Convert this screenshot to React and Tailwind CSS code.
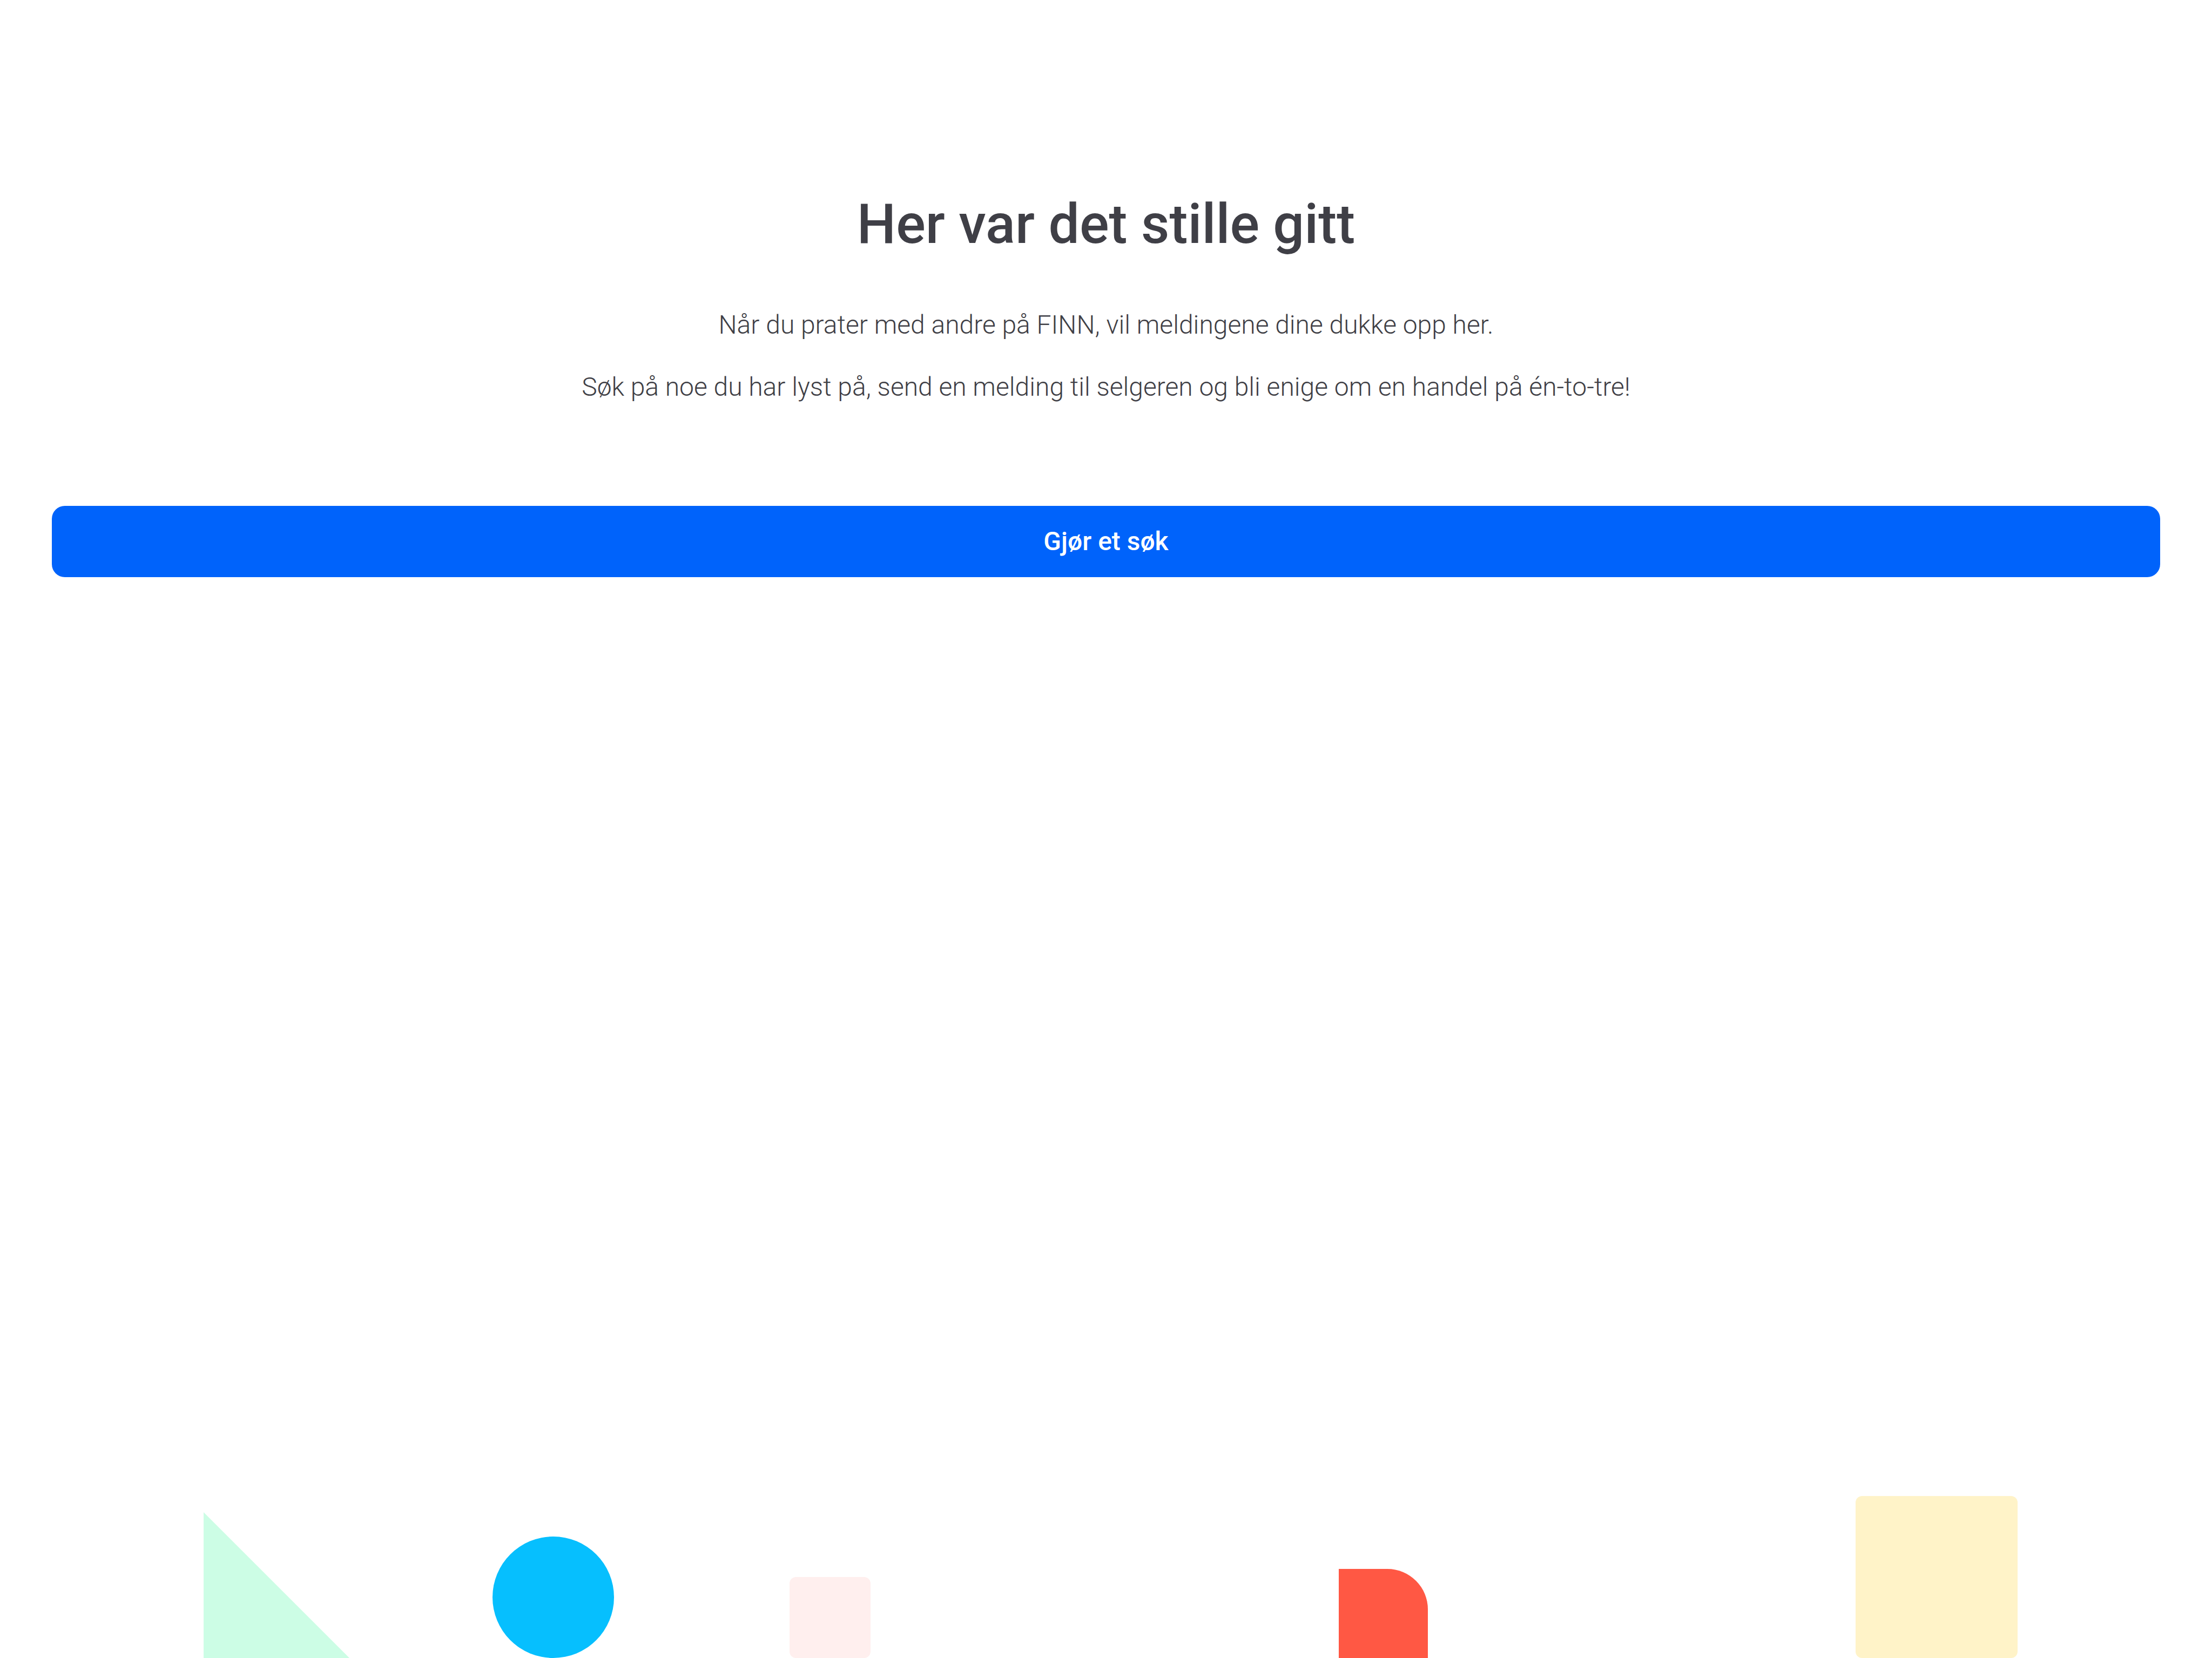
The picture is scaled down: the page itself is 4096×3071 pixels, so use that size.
function Shapes() {
  return (
    <div
      aria-hidden="true"
      className="mt-auto grid grid-cols-[377fr_270px_265fr_225px_325fr_150px_867fr_165px_792fr_300px_360fr] items-end"
    >
      <svg viewBox="0 0 270 270" className="col-start-2 w-full fill-[#ccfde5]">
        <path d="M0 0L270 270H0Z" />
      </svg>
      <div className="col-start-4 aspect-square rounded-full bg-[#06bffe]" />
      <div className="col-start-6 aspect-square rounded-xl bg-[#ffefee]" />
      <div className="col-start-8 aspect-square rounded-tr-[75px] bg-[#ff5844]" />
      <div className="col-start-10 aspect-square rounded-xl bg-[#fff3c8]" />
    </div>
  );
}

export default function App() {
  return (
    <main className="flex min-h-screen flex-col bg-white font-['Roboto',sans-serif] text-[#3f3f46]">
      <section className="px-24 pt-[355px] text-center">
        <h1 className="text-[102px] leading-[120px] font-medium">Her var det stille gitt</h1>
        <div className="mt-[91px] flex flex-col gap-[43px] text-5xl leading-[72px] font-light">
          <p>Når du prater med andre på FINN, vil meldingene dine dukke opp her.</p>
          <p>
            Søk på noe du har lyst på, send en melding til selgeren og bli enige om en handel på
            én-to-tre!
          </p>
        </div>
        <button
          type="button"
          className="mt-[184px] block w-full cursor-pointer rounded-3xl bg-[#0063fb] py-[30px] text-5xl leading-[72px] font-medium text-white"
        >
          Gjør et søk
        </button>
      </section>
      <Shapes />
    </main>
  );
}
